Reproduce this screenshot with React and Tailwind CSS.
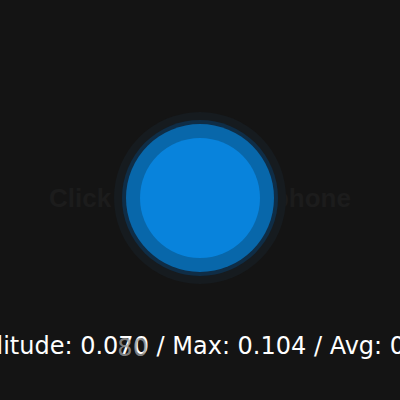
export default function App() {
  return (
    <div className="flex h-screen w-full flex-col items-center overflow-hidden bg-[#141414] pt-[112px]">
      <div className="relative flex h-[172px] w-full items-center justify-center">
        <span className="whitespace-nowrap font-['Liberation_Sans',sans-serif] text-[26px] font-bold text-[#1c1c1c]">
          Click to use microphone
        </span>
        <div className="absolute left-1/2 top-1/2 flex h-[172px] w-[172px] -translate-x-1/2 -translate-y-1/2 items-center justify-center rounded-full bg-[#161b1f]">
          <div className="flex h-[156px] w-[156px] items-center justify-center rounded-full bg-[#0f2d46]">
            <div className="flex h-[148px] w-[148px] items-center justify-center rounded-full bg-[#0867aa]">
              <div className="h-[120px] w-[120px] rounded-full bg-[#0883dc]" />
            </div>
          </div>
        </div>
      </div>
      <div className="mt-[46px] whitespace-nowrap font-['DejaVu_Sans',sans-serif] text-[24px] leading-8 text-white">
        Amplitude: 0.0
        <span className="relative">
          70
          <span className="absolute -left-[1px] top-0 text-[#9a9a9a]/80">80</span>
        </span>{' '}
        / Max: 0.104 / Avg: 0.062
      </div>
    </div>
  );
}
